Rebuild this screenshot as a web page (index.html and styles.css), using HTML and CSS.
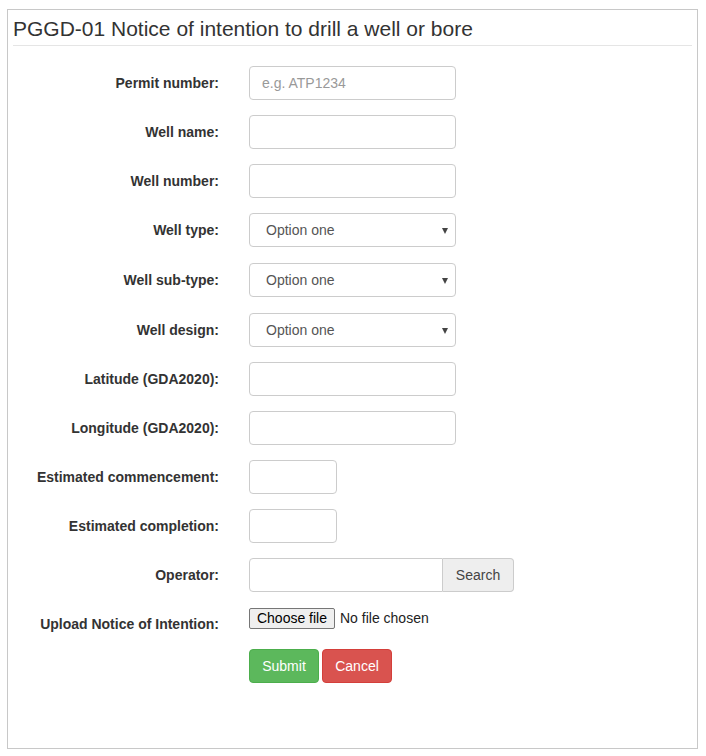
FILE: index.html
```html
<!DOCTYPE html>
<html lang="en">
<head>
<meta charset="utf-8">
<title>PGGD-01 Notice of intention to drill a well or bore</title>
<link rel="stylesheet" href="styles.css">
</head>
<body>
<div class="page">
  <div class="panel">
    <h3 class="panel-title">PGGD-01 Notice of intention to drill a well or bore</h3>
    <form class="form">
      <div class="form-group">
        <label class="control-label">Permit number:</label>
        <div class="field"><input class="form-control" type="text" placeholder="e.g. ATP1234"></div>
      </div>
      <div class="form-group">
        <label class="control-label">Well name:</label>
        <div class="field"><input class="form-control" type="text"></div>
      </div>
      <div class="form-group">
        <label class="control-label">Well number:</label>
        <div class="field"><input class="form-control" type="text"></div>
      </div>
      <div class="form-group select-group">
        <label class="control-label">Well type:</label>
        <div class="field"><div class="select-wrap"><select class="form-control select"><option>Option one</option></select></div></div>
      </div>
      <div class="form-group select-group">
        <label class="control-label">Well sub-type:</label>
        <div class="field"><div class="select-wrap"><select class="form-control select"><option>Option one</option></select></div></div>
      </div>
      <div class="form-group">
        <label class="control-label">Well design:</label>
        <div class="field"><div class="select-wrap"><select class="form-control select"><option>Option one</option></select></div></div>
      </div>
      <div class="form-group">
        <label class="control-label">Latitude (GDA2020):</label>
        <div class="field"><input class="form-control" type="text"></div>
      </div>
      <div class="form-group">
        <label class="control-label">Longitude (GDA2020):</label>
        <div class="field"><input class="form-control" type="text"></div>
      </div>
      <div class="form-group">
        <label class="control-label">Estimated commencement:</label>
        <div class="field"><input class="form-control short" type="text"></div>
      </div>
      <div class="form-group">
        <label class="control-label">Estimated completion:</label>
        <div class="field"><input class="form-control short" type="text"></div>
      </div>
      <div class="form-group">
        <label class="control-label">Operator:</label>
        <div class="field">
          <div class="input-group">
            <input class="form-control group-input" type="text">
            <span class="addon">Search</span>
          </div>
        </div>
      </div>
      <div class="form-group">
        <label class="control-label">Upload Notice of Intention:</label>
        <div class="field file-field">
          <button type="button" class="file-btn">Choose file</button>
          <span class="file-name">No file chosen</span>
        </div>
      </div>
      <div class="form-group">
        <span></span>
        <div class="field buttons">
          <button type="button" class="btn btn-success">Submit</button>
          <button type="button" class="btn btn-danger">Cancel</button>
        </div>
      </div>
    </form>
  </div>
</div>
</body>
</html>
```

FILE: styles.css
```css
* { box-sizing: border-box; }

html, body {
  margin: 0;
  padding: 0;
  background: #fff;
}

body {
  font-family: "Liberation Sans", Arial, Helvetica, sans-serif;
  font-size: 14px;
  line-height: 20px;
  color: #333;
}

.page {
  padding: 9px 8px 8px 7px;
}

.panel {
  width: 691px;
  height: 740px;
  border: 1px solid #c8c8c8;
  padding: 5px;
}

.panel-title {
  margin: 0;
  padding: 3px 0 5px 0;
  font-size: 21px;
  line-height: 22px;
  font-weight: 400;
  color: #333;
  border-bottom: 1px solid #e5e5e5;
}

.form {
  margin-top: 20px;
}

.form-group {
  display: grid;
  grid-template-columns: 206px 1fr;
  column-gap: 30px;
  margin-bottom: 15px;
}

.select-group {
  margin-bottom: 16px;
}

.control-label {
  text-align: right;
  font-weight: bold;
  padding-top: 7px;
}

.form-control {
  display: block;
  width: 207px;
  height: 34px;
  padding: 6px 12px;
  font-family: inherit;
  font-size: 14px;
  line-height: 20px;
  color: #555;
  background: #fff;
  border: 1px solid #ccc;
  border-radius: 4px;
  outline: none;
}

.form-control::placeholder {
  color: #999;
}

.short {
  width: 88px;
}

.select-wrap {
  position: relative;
  width: 207px;
}

.select {
  -webkit-appearance: none;
  appearance: none;
  padding-left: 16px;
}

.select-wrap::after {
  content: "";
  position: absolute;
  right: 8px;
  top: 15px;
  width: 0;
  height: 0;
  border-left: 3.5px solid transparent;
  border-right: 3.5px solid transparent;
  border-top: 6px solid #444;
  pointer-events: none;
}

.input-group {
  display: flex;
  width: 265px;
}

.group-input {
  width: 194px;
  border-top-right-radius: 0;
  border-bottom-right-radius: 0;
}

.addon {
  width: 71px;
  height: 34px;
  display: flex;
  align-items: center;
  justify-content: center;
  background: #eee;
  border: 1px solid #ccc;
  border-left: 0;
  border-radius: 0 4px 4px 0;
  color: #444;
  font-size: 14px;
}

.file-field {
  display: flex;
  align-items: center;
  height: 27px;
  padding-bottom: 5px;
}

.file-btn {
  height: 21px;
  width: 86px;
  padding: 0 6px;
  font-family: inherit;
  font-size: 14px;
  color: #000;
  background: #efefef;
  border: 1px solid #767676;
  border-radius: 2px;
}

.file-name {
  margin-left: 5px;
  color: #222;
}

.buttons {
  display: flex;
  gap: 3px;
}

.btn {
  height: 34px;
  width: 70px;
  padding: 6px 12px;
  font-family: inherit;
  font-size: 14px;
  line-height: 20px;
  color: #fff;
  border: 1px solid transparent;
  border-radius: 4px;
}

.btn-success {
  background: #5cb85c;
  border-color: #4cae4c;
}

.btn-danger {
  background: #d9534f;
  border-color: #d43f3a;
}
```
